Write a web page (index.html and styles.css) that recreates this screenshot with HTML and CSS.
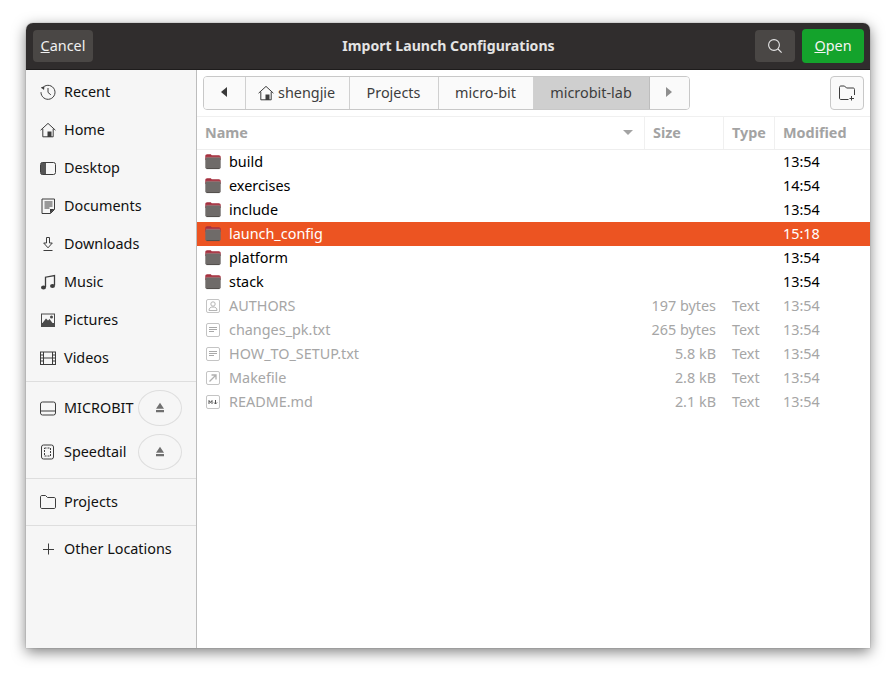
FILE: index.html
```html
<!DOCTYPE html>
<html lang="en">
<head>
    <meta charset="UTF-8">
    <title>Import Launch Configurations</title>
    <link rel="stylesheet" href="styles.css">
</head>
<body>
    <svg class="sprites" width="0" height="0">
        <symbol id="folder" viewBox="0 0 16 16">
            <path d="M.3 2.200C.3 1 1 .3 2.200 .3h3.600l.9 .9h7.100c1.200 0 1.900 .7 1.900 1.900V6H.3z" fill="#a5303f"/>
            <rect x=".3" y="3.200" width="15.400" height="11.800" rx="1.800" fill="#6f6b69"/>
            <path d="M1 3.200h14" stroke="#c98a8c" stroke-width=".5"/>
            <path d="M1.500 14.600h13" stroke="#4a4644" stroke-width=".8"/>
        </symbol>
        <symbol id="page" viewBox="0 0 16 16">
            <rect x="1.500" y="1.500" width="13" height="13" rx="1.500" fill="#fff" stroke="#c4c4c4"/>
            <path d="M4 5.500h8M4 7.500h8M4 9.500h5" stroke="#a8a8a8"/>
        </symbol>
        <symbol id="eject" viewBox="0 0 12 12">
            <path d="M6 .8l4 6h-8zM2 8h8v2.200H2z" fill="#707070"/>
        </symbol>
    </svg>

    <div class="window">
        <header class="titlebar">
            <div class="title-left">
                <button class="head-btn cancel-btn" type="button"><u>C</u>ancel</button>
            </div>
            <div class="title">Import Launch Configurations</div>
            <div class="title-right">
                <button class="head-btn search-btn" type="button">
                    <svg width="16" height="16" viewBox="0 0 16 16" fill="none" stroke="#e6e6e6" stroke-width="1.100">
                        <circle cx="7" cy="7" r="5.400"/>
                        <path d="M11 11l3.600 3.600"/>
                    </svg>
                </button>
                <button class="open-btn" type="button"><u>O</u>pen</button>
            </div>
        </header>

        <div class="content">
            <aside class="sidebar">
                <div class="side-group">
                    <div class="side-row">
                        <svg class="side-icon" viewBox="0 0 16 16" fill="none" stroke="#3d3d3d">
                            <path d="M2.200 4.400A7 7 0 1 1 1 8.200"/>
                            <path d="M.8 3.200l3.600-.6-.4 3.400z" fill="#3d3d3d" stroke="none"/>
                            <path d="M8 4v4.400l2.800 2.400"/>
                        </svg>
                        <span>Recent</span>
                    </div>
                    <div class="side-row">
                        <svg class="side-icon" viewBox="0 0 16 16" fill="none" stroke="#3d3d3d">
                            <path d="M.6 8.200L8 1.400l7.400 6.800"/>
                            <path d="M2.800 6.800v8h10.400v-8"/>
                            <rect x="7.500" y="9.500" width="4" height="5.500" fill="#3d3d3d" stroke="none"/>
                        </svg>
                        <span>Home</span>
                    </div>
                    <div class="side-row">
                        <svg class="side-icon" viewBox="0 0 16 16" fill="none" stroke="#3d3d3d">
                            <path d="M6 2.500H2.500C1.400 2.500 1 3 1 4v9c0 .9.4 1.500 1.500 1.500H6z" fill="#555" stroke="none"/>
                            <rect x=".5" y="2.500" width="15" height="12" rx="2"/>
                        </svg>
                        <span>Desktop</span>
                    </div>
                    <div class="side-row">
                        <svg class="side-icon" viewBox="0 0 16 16" fill="none" stroke="#3d3d3d">
                            <path d="M2 1h12.500v10.500l-4 4H2z"/>
                            <path d="M4.500 4h8M4.500 6h8M4.500 8h8M4.500 10h5"/>
                            <path d="M10 15.500V11h4.500z" fill="#3d3d3d" stroke="none"/>
                        </svg>
                        <span>Documents</span>
                    </div>
                    <div class="side-row">
                        <svg class="side-icon" viewBox="0 0 16 16" fill="none" stroke="#3d3d3d">
                            <path d="M6.500 1.500h3V7h2.800L8 11.800 3.700 7h2.800z"/>
                            <path d="M3.500 14.500h9"/>
                        </svg>
                        <span>Downloads</span>
                    </div>
                    <div class="side-row">
                        <svg class="side-icon" viewBox="0 0 16 16" fill="none">
                            <path d="M5.500 13V3.200l9-1.700V11.500" stroke="#3d3d3d" stroke-width="1.300"/>
                            <ellipse cx="3.500" cy="13.400" rx="2.500" ry="2" fill="#3d3d3d"/>
                            <ellipse cx="12.500" cy="11.900" rx="2.500" ry="2" fill="#3d3d3d"/>
                        </svg>
                        <span>Music</span>
                    </div>
                    <div class="side-row">
                        <svg class="side-icon" viewBox="0 0 16 16">
                            <path d="M1 1.500h14v13.500H1z" fill="#4a4a4a"/>
                            <path d="M2 2.500h12V11H2z" fill="#f6f6f6"/>
                            <path d="M2.500 11l3.500-4.500 2 2 1.500-1.500 3 4z" fill="#4a4a4a"/>
                            <circle cx="11.500" cy="5" r="1.500" fill="#4a4a4a"/>
                        </svg>
                        <span>Pictures</span>
                    </div>
                    <div class="side-row">
                        <svg class="side-icon" viewBox="0 0 16 16" fill="none" stroke="#3d3d3d">
                            <rect x=".5" y="2" width="15" height="12.500"/>
                            <path d="M3.500 2v12.500M12.500 2v12.500M3.500 8h9"/>
                            <path d="M.5 5h3M.5 8h3M.5 11h3M12.500 5h3M12.500 8h3M12.500 11h3"/>
                        </svg>
                        <span>Videos</span>
                    </div>
                </div>

                <div class="side-group mounts">
                    <div class="mount-row">
                        <svg class="side-icon" viewBox="0 0 16 16" fill="none" stroke="#3d3d3d">
                            <rect x=".5" y="2" width="15" height="13" rx="2"/>
                            <path d="M.5 11h15"/>
                        </svg>
                        <span>MICROBIT</span>
                        <button class="eject" type="button"><svg width="12" height="12"><use href="#eject"/></svg></button>
                    </div>
                    <div class="mount-row">
                        <svg class="side-icon" viewBox="0 0 16 16" fill="none" stroke="#3d3d3d">
                            <rect x="1.500" y="1" width="12" height="14" rx="2"/>
                            <rect x="4.500" y="4" width="6" height="8" stroke-dasharray="2 1"/>
                        </svg>
                        <span>Speedtail</span>
                        <button class="eject" type="button"><svg width="12" height="12"><use href="#eject"/></svg></button>
                    </div>
                </div>

                <div class="side-group single">
                    <div class="side-row">
                        <svg class="side-icon" viewBox="0 0 16 16" fill="none" stroke="#3d3d3d">
                            <path d="M.5 3C.5 2 1 1.500 2 1.500h3.500L7.500 3.500H14c1 0 1.500.5 1.500 1.500v8c0 1-.5 1.500-1.500 1.500H2c-1 0-1.500-.5-1.500-1.500z"/>
                        </svg>
                        <span>Projects</span>
                    </div>
                </div>

                <div class="side-group single last">
                    <div class="side-row">
                        <svg class="side-icon" viewBox="0 0 16 16" fill="none" stroke="#3d3d3d">
                            <path d="M8.500 2.500v11M3 8.500h11"/>
                        </svg>
                        <span>Other Locations</span>
                    </div>
                </div>
            </aside>

            <main class="main">
                <div class="toolbar">
                    <div class="pathbar">
                        <button class="path-btn arrow-btn" type="button"><span class="tri tri-left"></span></button>
                        <button class="path-btn home-btn" type="button">
                            <svg width="16" height="16" viewBox="0 0 16 16" fill="none" stroke="#3d3d3d">
                                <path d="M.6 8.200L8 1.400l7.400 6.800"/>
                                <path d="M2.800 6.800v8h10.400v-8"/>
                                <rect x="7.500" y="9.500" width="4" height="5.500" fill="#3d3d3d" stroke="none"/>
                            </svg>
                            shengjie
                        </button>
                        <button class="path-btn projects-btn" type="button">Projects</button>
                        <button class="path-btn microbit-btn" type="button">micro-bit</button>
                        <button class="path-btn lab-btn" type="button">microbit-lab</button>
                        <button class="path-btn arrow-btn next-btn" type="button"><span class="tri tri-right"></span></button>
                    </div>
                    <button class="newfolder-btn" type="button">
                        <svg width="16" height="16" viewBox="0 0 16 16" fill="none" stroke="#3d3d3d">
                            <path d="M9.500 14.500H2c-1 0-1.500-.5-1.500-1.500V2.500C.5 1.500 1 1 2 1h3.500l2 2H14c1 0 1.500.5 1.500 1.500V10"/>
                            <path d="M12.500 11v4.500M10.500 13.500h4.500"/>
                        </svg>
                    </button>
                </div>

                <div class="list-head">
                    <div class="head-cell name-head">Name<span class="sort-arrow"></span></div>
                    <div class="head-cell">Size</div>
                    <div class="head-cell">Type</div>
                    <div class="head-cell">Modified</div>
                </div>

                <div class="list">
                    <div class="file-row">
                        <div class="name-cell"><svg width="16" height="16"><use href="#folder"/></svg>build</div><div class="size-cell"></div><div class="type-cell"></div><div class="time-cell">13:54</div>
                    </div>
                    <div class="file-row">
                        <div class="name-cell"><svg width="16" height="16"><use href="#folder"/></svg>exercises</div><div class="size-cell"></div><div class="type-cell"></div><div class="time-cell">14:54</div>
                    </div>
                    <div class="file-row">
                        <div class="name-cell"><svg width="16" height="16"><use href="#folder"/></svg>include</div><div class="size-cell"></div><div class="type-cell"></div><div class="time-cell">13:54</div>
                    </div>
                    <div class="file-row selected">
                        <div class="name-cell"><svg width="16" height="16"><use href="#folder"/></svg>launch_config</div><div class="size-cell"></div><div class="type-cell"></div><div class="time-cell">15:18</div>
                    </div>
                    <div class="file-row">
                        <div class="name-cell"><svg width="16" height="16"><use href="#folder"/></svg>platform</div><div class="size-cell"></div><div class="type-cell"></div><div class="time-cell">13:54</div>
                    </div>
                    <div class="file-row">
                        <div class="name-cell"><svg width="16" height="16"><use href="#folder"/></svg>stack</div><div class="size-cell"></div><div class="type-cell"></div><div class="time-cell">13:54</div>
                    </div>
                    <div class="file-row disabled">
                        <div class="name-cell">
                            <svg width="16" height="16" viewBox="0 0 16 16" fill="none">
                                <rect x="1.500" y="1.500" width="13" height="13" rx="1.500" fill="#fff" stroke="#c4c4c4"/>
                                <circle cx="8" cy="6" r="2.200" stroke="#b5b5b5"/>
                                <path d="M4 12.500c0-2.500 1.500-3.500 4-3.500s4 1 4 3.500z" stroke="#b5b5b5"/>
                            </svg>AUTHORS</div><div class="size-cell">197 bytes</div><div class="type-cell">Text</div><div class="time-cell">13:54</div>
                    </div>
                    <div class="file-row disabled">
                        <div class="name-cell"><svg width="16" height="16"><use href="#page"/></svg>changes_pk.txt</div><div class="size-cell">265 bytes</div><div class="type-cell">Text</div><div class="time-cell">13:54</div>
                    </div>
                    <div class="file-row disabled">
                        <div class="name-cell"><svg width="16" height="16"><use href="#page"/></svg>HOW_TO_SETUP.txt</div><div class="size-cell">5.8 kB</div><div class="type-cell">Text</div><div class="time-cell">13:54</div>
                    </div>
                    <div class="file-row disabled">
                        <div class="name-cell">
                            <svg width="16" height="16" viewBox="0 0 16 16" fill="none">
                                <rect x="1.500" y="1.500" width="13" height="13" rx="1.500" fill="#fff" stroke="#c4c4c4"/>
                                <path d="M4.500 11.500L10.500 5.500M6.500 5h4.500v4.500" stroke="#b0b0b0" stroke-width="1.300"/>
                            </svg>Makefile</div><div class="size-cell">2.8 kB</div><div class="type-cell">Text</div><div class="time-cell">13:54</div>
                    </div>
                    <div class="file-row disabled">
                        <div class="name-cell">
                            <svg width="16" height="16" viewBox="0 0 16 16" fill="none">
                                <rect x="1.500" y="1.500" width="13" height="13" rx="1.500" fill="#fff" stroke="#c4c4c4"/>
                                <path d="M4 10V6.500l1.500 2 1.500-2V10M10.500 6v4M9 8.500l1.500 1.500L12 8.500" stroke="#555"/>
                            </svg>README.md</div><div class="size-cell">2.1 kB</div><div class="type-cell">Text</div><div class="time-cell">13:54</div>
                    </div>
                </div>
            </main>
        </div>
    </div>
</body>
</html>
```

FILE: styles.css
```css
* {
    box-sizing: border-box;
}

html, body {
    height: 100%;
}

body {
    margin: 0;
    padding: 23px 26px 29px;
    background-color: #fff;
    font-family: "Noto Sans", "Liberation Sans", sans-serif;
    font-size: 14.4px;
    color: #111;
    overflow: hidden;
}

.sprites {
    display: none;
}

button {
    font: inherit;
    padding: 0;
    cursor: pointer;
}

svg {
    flex: none;
}

.window {
    height: 625px;
    display: flex;
    flex-direction: column;
    border-radius: 7px 7px 0 0;
    box-shadow: 0 0 1px #555, 0 4px 14px rgba(0, 0, 0, 0.5);
    overflow: hidden;
    background-color: #fff;
}

/* title bar */
.titlebar {
    height: 47px;
    flex: none;
    display: grid;
    grid-template-columns: 1fr auto 1fr;
    align-items: center;
    padding: 0 6px 1px 7px;
    background-color: #302d2d;
    border-bottom: 1px solid #1e1c1c;
}

.title-right {
    display: flex;
    align-items: center;
    justify-content: flex-end;
    gap: 7px;
}

.head-btn {
    height: 32px;
    border: none;
    border-radius: 4px;
    background-color: #4a4745;
    color: #f0f0f0;
}

.cancel-btn {
    width: 60px;
    display: block;
}

.search-btn {
    width: 40px;
    display: flex;
    align-items: center;
    justify-content: center;
}

.title {
    font-size: 14.1px;
    font-weight: 700;
    color: #e4e4e4;
}

.open-btn {
    width: 62px;
    height: 34px;
    border: none;
    border-radius: 4px;
    background-color: #14a32c;
    color: #f4f4f4;
}

/* sidebar */
.content {
    flex: 1;
    display: flex;
    min-height: 0;
}

.sidebar {
    width: 171px;
    flex: none;
    display: flex;
    flex-direction: column;
    background-color: #f6f6f6;
    border-right: 1px solid #bdbdbd;
}

.side-group {
    border-bottom: 1px solid #dedede;
    padding: 3px 0 4px;
}

.side-row {
    height: 38px;
    display: flex;
    align-items: center;
    gap: 8px;
    padding: 0 0 2px 14px;
}

.side-icon {
    width: 16px;
    height: 16px;
    margin-bottom: -2px;
}

.mounts {
    padding: 8px 0;
    display: flex;
    flex-direction: column;
    gap: 8px;
}

.mount-row {
    height: 36px;
    display: flex;
    align-items: center;
    gap: 8px;
    padding: 0 0 2px 14px;
    position: relative;
}

.eject {
    position: absolute;
    left: 112px;
    top: 0;
    width: 44px;
    height: 36px;
    border: 1px solid #dedede;
    border-radius: 50%;
    background-color: #f6f6f6;
    display: flex;
    align-items: center;
    justify-content: center;
}

.single {
    padding: 4px 0;
}

.last {
    border-bottom: none;
}

/* path bar */
.main {
    flex: 1;
    min-width: 0;
    display: flex;
    flex-direction: column;
}

.toolbar {
    height: 47px;
    flex: none;
    display: flex;
    justify-content: space-between;
    padding: 6px 6px 0;
    border-bottom: 1px solid #f0f0f0;
}

.pathbar {
    height: 34px;
    display: flex;
    border: 1px solid #c8c8c8;
    border-radius: 4px;
    background-color: #fafafa;
    overflow: hidden;
}

.path-btn {
    border: none;
    border-right: 1px solid #d0d0d0;
    padding: 0 1px 2px 0;
    background-color: #fafafa;
    color: #3d3d3d;
    display: flex;
    align-items: center;
    justify-content: center;
}

.arrow-btn {
    width: 42px;
}

.next-btn {
    width: 39px;
    border-right: none;
}

.home-btn {
    width: 104px;
    gap: 4px;
    justify-content: flex-start;
    padding-left: 12px;
}

.home-btn svg {
    margin-bottom: -2px;
}

.projects-btn {
    width: 89px;
}

.microbit-btn {
    width: 95px;
}

.lab-btn {
    width: 116px;
    background-color: #cfcfcf;
    border-right-color: #bdbdbd;
}

.tri {
    width: 0;
    height: 0;
    border-top: 5px solid transparent;
    border-bottom: 5px solid transparent;
}

.tri-left {
    border-right: 6px solid #3a3a3a;
}

.tri-right {
    border-left: 6px solid #8e8e8e;
}

.newfolder-btn {
    width: 34px;
    height: 34px;
    border: 1px solid #c8c8c8;
    border-radius: 4px;
    background-color: #fafafa;
    display: flex;
    align-items: center;
    justify-content: center;
}

/* file list */
.list-head, .file-row {
    display: grid;
    grid-template-columns: 448px 79px 51px 1fr;
}

.list-head {
    height: 33px;
    flex: none;
    border-bottom: 1px solid #eee;
}

.head-cell {
    display: flex;
    align-items: center;
    padding: 0 0 2px 8px;
    border-right: 1px solid #f0f0f0;
    font-weight: 700;
    color: #a3a3a3;
}

.head-cell:last-child {
    border-right: none;
}

.name-head {
    justify-content: space-between;
    padding-right: 11px;
}

.sort-arrow {
    width: 0;
    height: 0;
    border-left: 5px solid transparent;
    border-right: 5px solid transparent;
    border-top: 5px solid #a3a3a3;
}

.file-row {
    height: 24px;
    padding-bottom: 2px;
    align-items: center;
    color: #000;
}

.name-cell {
    display: flex;
    align-items: center;
    gap: 8px;
    padding-left: 8px;
}

.name-cell svg {
    margin-bottom: -2px;
}

.size-cell {
    padding-right: 8px;
    text-align: right;
}

.type-cell, .time-cell {
    padding-left: 8px;
}

.selected {
    background-color: #ec5422;
    color: #fff;
}

.disabled {
    color: #a6a6a6;
}
```
